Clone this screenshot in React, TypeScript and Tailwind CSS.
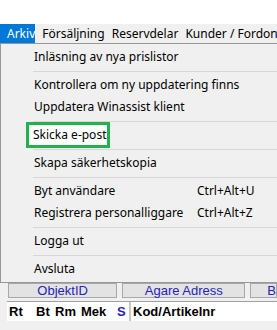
import React from 'react';

type Entry = { label?: string; shortcut?: string; sep?: boolean };

const items: Entry[] = [
  { label: 'Inläsning av nya prislistor' },
  { sep: true },
  { label: 'Kontrollera om ny uppdatering finns' },
  { label: 'Uppdatera Winassist klient' },
  { sep: true },
  { label: 'Skicka e-post' },
  { sep: true },
  { label: 'Skapa säkerhetskopia' },
  { sep: true },
  { label: 'Byt användare', shortcut: 'Ctrl+Alt+U' },
  { label: 'Registrera personalliggare', shortcut: 'Ctrl+Alt+Z' },
  { sep: true },
  { label: 'Logga ut' },
  { sep: true },
  { label: 'Avsluta' },
];

const menuFont = { fontFamily: '"Noto Sans", "Segoe UI", sans-serif' };

export default function App() {
  return (
    <div className="relative w-[277px] h-[330px] overflow-hidden bg-white text-black" style={menuFont}>
      <div className="h-[24px] bg-white" />

      {/* menu bar */}
      <div className="flex h-[19px] items-center bg-[#f0f0f0] text-[12px] leading-[19px] whitespace-nowrap">
        <div className="w-[41px] h-full pl-[7px] bg-[#0078d7] text-white">Arkiv</div>
        <div className="w-[72px] h-full pl-[7px]">Försäljning</div>
        <div className="w-[74px] h-full pl-[7px]">Reservdelar</div>
        <div className="h-full pl-[7px]">Kunder / Fordon</div>
      </div>

      {/* window content underneath the menu */}
      <div
        className="h-[287px] bg-[#f0f0f0] pt-[240px]"
        style={{ fontFamily: '"Liberation Sans", Arial, sans-serif' }}
      >
        <div className="flex gap-[5px] pl-[8px] h-[15px] text-[13px] leading-[13px] text-[#2424b8]">
          <div className="w-[110px] border border-[#a8a8a8] bg-[#e3e3e3] text-center">ObjektID</div>
          <div className="w-[124px] border border-[#a8a8a8] bg-[#e3e3e3] text-center">Agare Adress</div>
          <div className="flex-1 border border-[#a8a8a8] bg-[#e3e3e3] pl-[16px]">B</div>
        </div>
        <div className="mt-[3px] ml-[7px] flex h-[20px] border-t border-[#a0a0a0] bg-white text-[13px] font-bold leading-[19px]">
          <div className="flex w-[124px] pl-[2px] border-r-2 border-[#c8c8c8]">
            <span className="w-[27px]">Rt</span>
            <span className="w-[19px]">Bt</span>
            <span className="w-[26px]">Rm</span>
            <span className="w-[36px]">Mek</span>
            <span className="text-[#2424b8]">S</span>
          </div>
          <div className="pl-[2px]">Kod/Artikelnr</div>
        </div>
      </div>

      {/* Arkiv dropdown */}
      <div className="absolute left-0 top-[43px] w-[300px] border border-[#979797] bg-[#f0f0f0] py-[2px] text-[12px] whitespace-nowrap">
        {items.map((it, i) =>
          it.sep ? (
            <div key={i} className="h-[6px] flex items-center pl-[32px]">
              <div className="h-px w-full bg-[#d7d7d7]" />
            </div>
          ) : (
            <div key={i} className="flex h-[22px] items-center pl-[33px]">
              <span className="w-[163px]">{it.label}</span>
              {it.shortcut && <span>{it.shortcut}</span>}
            </div>
          )
        )}
      </div>

      {/* highlight box around "Skicka e-post" */}
      <div className="absolute left-[26px] top-[122px] w-[84px] h-[26px] border-[3px] border-[#22b14c] bg-white flex items-center pl-[4px] text-[12px] whitespace-nowrap">
        Skicka e-post
      </div>
    </div>
  );
}
